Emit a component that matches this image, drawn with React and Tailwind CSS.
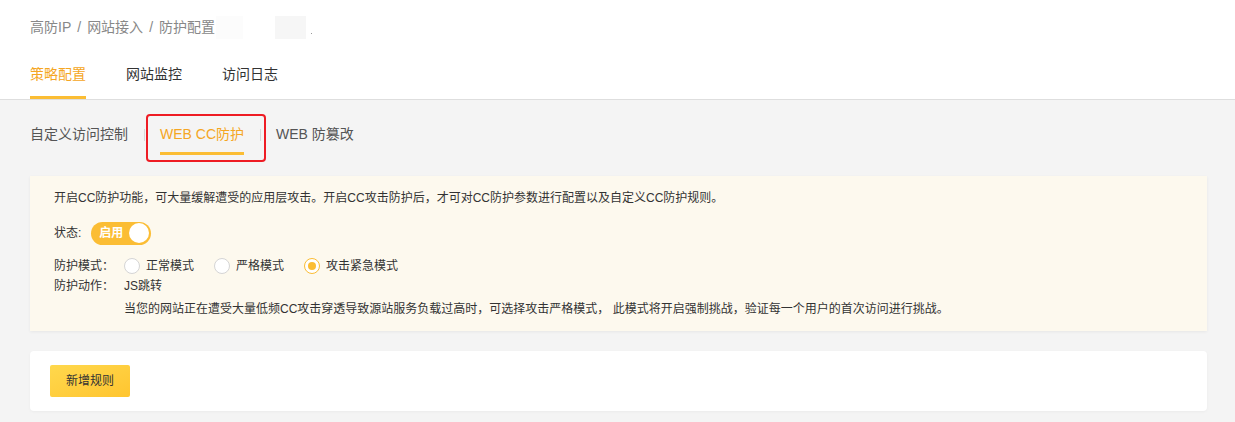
import { useState } from 'react'

const TOP_TABS = ['策略配置', '网站监控', '访问日志']
const SUB_TABS = ['自定义访问控制', 'WEB CC防护', 'WEB 防篡改']
const MODES = ['正常模式', '严格模式', '攻击紧急模式']

function Radio({ checked, label, onClick }) {
  return (
    <button type="button" onClick={onClick} className="flex items-center gap-[6px]">
      <span
        className={
          checked
            ? 'w-4 h-4 rounded-full border border-[#fbbd34] bg-white flex items-center justify-center'
            : 'w-4 h-4 rounded-full border border-[#d5d5d5] bg-white'
        }
      >
        {checked && <span className="w-2 h-2 rounded-full bg-[#fbbd34]" />}
      </span>
      <span className="text-[#333]">{label}</span>
    </button>
  )
}

export default function App() {
  const [tab, setTab] = useState(0)
  const [sub, setSub] = useState(1)
  const [enabled, setEnabled] = useState(true)
  const [mode, setMode] = useState(2)

  return (
    <div className="min-h-[422px] bg-[#f4f4f4] font-['Liberation_Sans','Noto_Sans_CJK_SC',sans-serif] text-[#333]">
      <div className="bg-white border-b border-[#dedede] px-[30px]">
        <div className="h-[54px] flex items-center text-[14px] text-[#888]">
          <span>高防IP</span>
          <span className="mx-[6px]">/</span>
          <span>网站接入</span>
          <span className="mx-[6px]">/</span>
          <span>防护配置</span>
          <span className="ml-[1px] w-[27px] h-[23px] bg-[#fcfcfc]" />
          <span className="ml-[32px] w-[31px] h-[23px] bg-[#f6f6f6]" />
          <span className="ml-[5px] mt-[12px] w-[1px] h-[1px] bg-[#999]" />
        </div>
        <div className="flex gap-10 text-[14px]">
          {TOP_TABS.map((t, i) => (
            <button key={t} type="button" onClick={() => setTab(i)} className="flex flex-col items-stretch">
              <span className={i === tab ? 'pt-[10px] leading-5 text-[#f5a623]' : 'pt-[10px] leading-5 text-[#333]'}>{t}</span>
              <span className={i === tab ? 'mt-3 h-[3px] bg-[#fbbd34]' : 'mt-3 h-[3px]'} />
            </button>
          ))}
        </div>
      </div>

      <div className="pl-[30px] pr-[28px]">
        <div className="relative flex items-start pt-6 pb-[21px] text-[14px]">
          {SUB_TABS.map((t, i) => (
            <div key={t} className="flex items-start">
              {i > 0 && <span className="ml-[16px] mr-[15px] mt-[5px] w-px h-[12px] bg-[#d8d8d8]" />}
              <button type="button" onClick={() => setSub(i)} className="flex flex-col items-stretch">
                <span className={i === sub ? 'leading-5 text-[#f5a623]' : 'leading-5 text-[#555]'}>{t}</span>
                <span className={i === sub ? 'mt-2 h-[3px] bg-[#fbbd34]' : 'mt-2 h-[3px]'} />
              </button>
            </div>
          ))}
          <div className="absolute left-[116px] top-[14px] w-[120px] h-[48px] border-2 border-[#ee1c24] rounded-[4px] pointer-events-none" />
        </div>

        <div className="bg-[#fdf9ee] shadow-[0_1px_3px_rgba(0,0,0,0.06)] px-6 pt-[13px] pb-[12px] text-[12px]">
          <p className="leading-[18px]">
            开启CC防护功能，可大量缓解遭受的应用层攻击。开启CC攻击防护后，才可对CC防护参数进行配置以及自定义CC防护规则。
          </p>
          <div className="mt-[11px] h-[30px] flex items-center gap-[10px]">
            <span>状态:</span>
            <button
              type="button"
              onClick={() => setEnabled(!enabled)}
              className={
                enabled
                  ? 'w-[60px] h-[23px] rounded-full bg-[#fbbd34] flex items-center justify-between pl-[8px] pr-[2px]'
                  : 'w-[60px] h-[23px] rounded-full bg-[#ccc] flex items-center justify-between pl-[2px] pr-[8px]'
              }
            >
              {enabled ? (
                <>
                  <span className="text-white font-bold text-[12px]">启用</span>
                  <span className="w-[20px] h-[20px] rounded-full bg-white" />
                </>
              ) : (
                <>
                  <span className="w-[20px] h-[20px] rounded-full bg-white" />
                  <span className="text-white font-bold text-[12px]">停用</span>
                </>
              )}
            </button>
          </div>
          <div className="mt-[8px] h-[20px] flex items-center">
            <span className="w-[70px]">防护模式：</span>
            <div className="flex gap-[20px]">
              {MODES.map((m, i) => (
                <Radio key={m} label={m} checked={mode === i} onClick={() => setMode(i)} />
              ))}
            </div>
          </div>
          <div className="h-[20px] flex items-center">
            <span className="w-[70px]">防护动作：</span>
            <span>JS跳转</span>
          </div>
          <p className="pl-[70px] mt-[3px] leading-[20px]">
            当您的网站正在遭受大量低频CC攻击穿透导致源站服务负载过高时，可选择攻击严格模式， 此模式将开启强制挑战，验证每一个用户的首次访问进行挑战。
          </p>
        </div>

        <div className="mt-5 bg-white rounded-[4px] shadow-[0_1px_3px_rgba(0,0,0,0.04)] px-5 py-[14px]">
          <button
            type="button"
            className="w-[80px] h-[32px] rounded-[2px] bg-gradient-to-br from-[#ffd84c] to-[#ffc52f] text-[12px] text-[#333]"
          >
            新增规则
          </button>
        </div>
      </div>
    </div>
  )
}
